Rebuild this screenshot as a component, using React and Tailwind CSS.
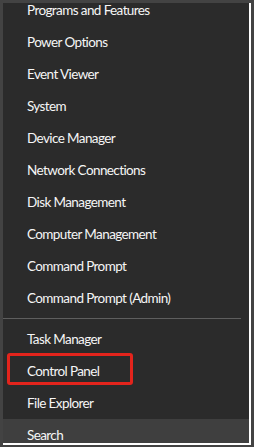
import React from "react";

const top = [
  "Programs and Features",
  "Power Options",
  "Event Viewer",
  "System",
  "Device Manager",
  "Network Connections",
  "Disk Management",
  "Computer Management",
  "Command Prompt",
  "Command Prompt (Admin)",
];

const bottom = ["Task Manager", "Control Panel", "File Explorer"];

function Item({ label, active }) {
  return (
    <div
      className={`h-[32px] flex items-center pl-[24px] text-[13.5px] tracking-[-0.6px] text-[#f6f6f6] leading-none ${
        active ? "bg-[#3f3f3f]" : ""
      }`}
    >
      <span className="pt-[2px]">{label}</span>
    </div>
  );
}

export default function App() {
  return (
    <div
      className="w-[254px] h-[447px] bg-[#434343] pt-[3px] pl-[3px] overflow-hidden"
      style={{ fontFamily: '"Lato", "Roboto", sans-serif' }}
    >
      <div className="relative w-[248px] h-[442px] bg-[#2b2b2b] border-r-2 border-b-2 border-white overflow-hidden">
        <div className="-mt-[9px] flex flex-col">
          {top.map((t) => (
            <Item key={t} label={t} />
          ))}
          <div className="py-[4px] pr-[8px]">
            <div className="h-px bg-[#5e5e5e]" />
          </div>
          {bottom.map((t) => (
            <Item key={t} label={t} />
          ))}
          <Item label="Search" active />
        </div>
        <div className="absolute left-[4px] top-[350px] w-[126px] h-[32px] border-[3px] border-[#e3241c] rounded-[3px]" />
      </div>
    </div>
  );
}
